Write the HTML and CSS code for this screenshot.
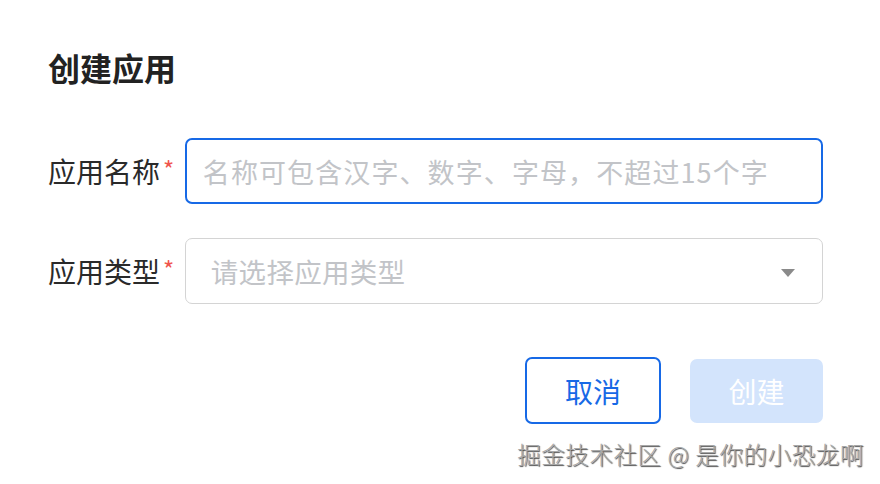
FILE: index.html
```html
<!DOCTYPE html>
<html lang="zh">
<head>
<meta charset="utf-8">
<link rel="stylesheet" href="styles.css">
</head>
<body>
<div class="dialog">
  <h1 class="title">创建应用</h1>
  <div class="form">
    <div class="row">
      <label class="label">应用名称<span class="req">*</span></label>
      <div class="input focused"><span class="ph ph-name">名称可包含汉字、数字、字母，不超过15个字</span></div>
    </div>
    <div class="row">
      <label class="label">应用类型<span class="req">*</span></label>
      <div class="input select"><span class="ph ph-type">请选择应用类型</span><span class="arrow"></span></div>
    </div>
  </div>
  <div class="actions">
    <button class="btn btn-cancel">取消</button>
    <button class="btn btn-create">创建</button>
  </div>
  <div class="watermark">掘金技术社区 @ 是你的小恐龙啊</div>
</div>
</body>
</html>
```

FILE: styles.css
```css
html, body {
  margin: 0;
  padding: 0;
  background: #ffffff;
}
body {
  font-family: "Noto Sans CJK SC", "Noto Sans", sans-serif;
  width: 880px;
  height: 484px;
  overflow: hidden;
}
.dialog {
  padding: 44px 57px 0 48px;
  display: flex;
  flex-direction: column;
}
.title {
  margin: 0;
  font-size: 32px;
  line-height: 46px;
  font-weight: 700;
  color: #222222;
}
.form {
  margin-top: 48px;
  display: flex;
  flex-direction: column;
  gap: 34px;
}
.row {
  display: flex;
  align-items: center;
}
.label {
  width: 137px;
  font-size: 28px;
  color: #2a2a2a;
  display: flex;
  align-items: flex-start;
  line-height: 40px;
}
.req {
  color: #f0544c;
  font-size: 24px;
  line-height: 24px;
  margin-left: 3px;
  margin-top: 6px;
}
.input {
  box-sizing: border-box;
  width: 639px;
  height: 66px;
  border: 1.5px solid #d4d4d4;
  border-radius: 7px;
  display: flex;
  align-items: center;
  padding-left: 18px;
  position: relative;
}
.input.focused {
  border: 2.5px solid #1769e6;
  padding-left: 16px;
}
.ph {
  color: #c2c4c8;
  white-space: nowrap;
}
.ph-name {
  font-size: 27px;
  letter-spacing: 1.1px;
}
.ph-type {
  font-size: 27.5px;
  padding-left: 7px;
  letter-spacing: 0.3px;
}
.arrow {
  position: absolute;
  right: 27px;
  top: 30px;
  width: 0;
  height: 0;
  border-left: 7px solid transparent;
  border-right: 7px solid transparent;
  border-top: 8px solid #8a8a8a;
}
.actions {
  margin-top: 53px;
  display: flex;
  justify-content: flex-end;
  align-items: center;
  gap: 29px;
}
.btn {
  font-family: "Noto Sans CJK SC", "Noto Sans", sans-serif;
  font-size: 28px;
  border-radius: 7px;
  box-sizing: border-box;
  padding: 0;
  cursor: pointer;
}
.btn-cancel {
  width: 136px;
  height: 67px;
  background: #ffffff;
  border: 2px solid #1769e6;
  color: #1769e6;
  margin-left: -1px;
}
.btn-create {
  width: 133px;
  height: 64px;
  background: #d3e4fc;
  border: none;
  color: #ffffff;
}
.watermark {
  align-self: flex-end;
  margin-top: 13px;
  margin-right: -41px;
  font-size: 23.5px;
  font-weight: 300;
  color: #a8a8a8;
  text-shadow: 1px 1px 1px #4a4a4a;
  letter-spacing: 0.6px;
}
```
